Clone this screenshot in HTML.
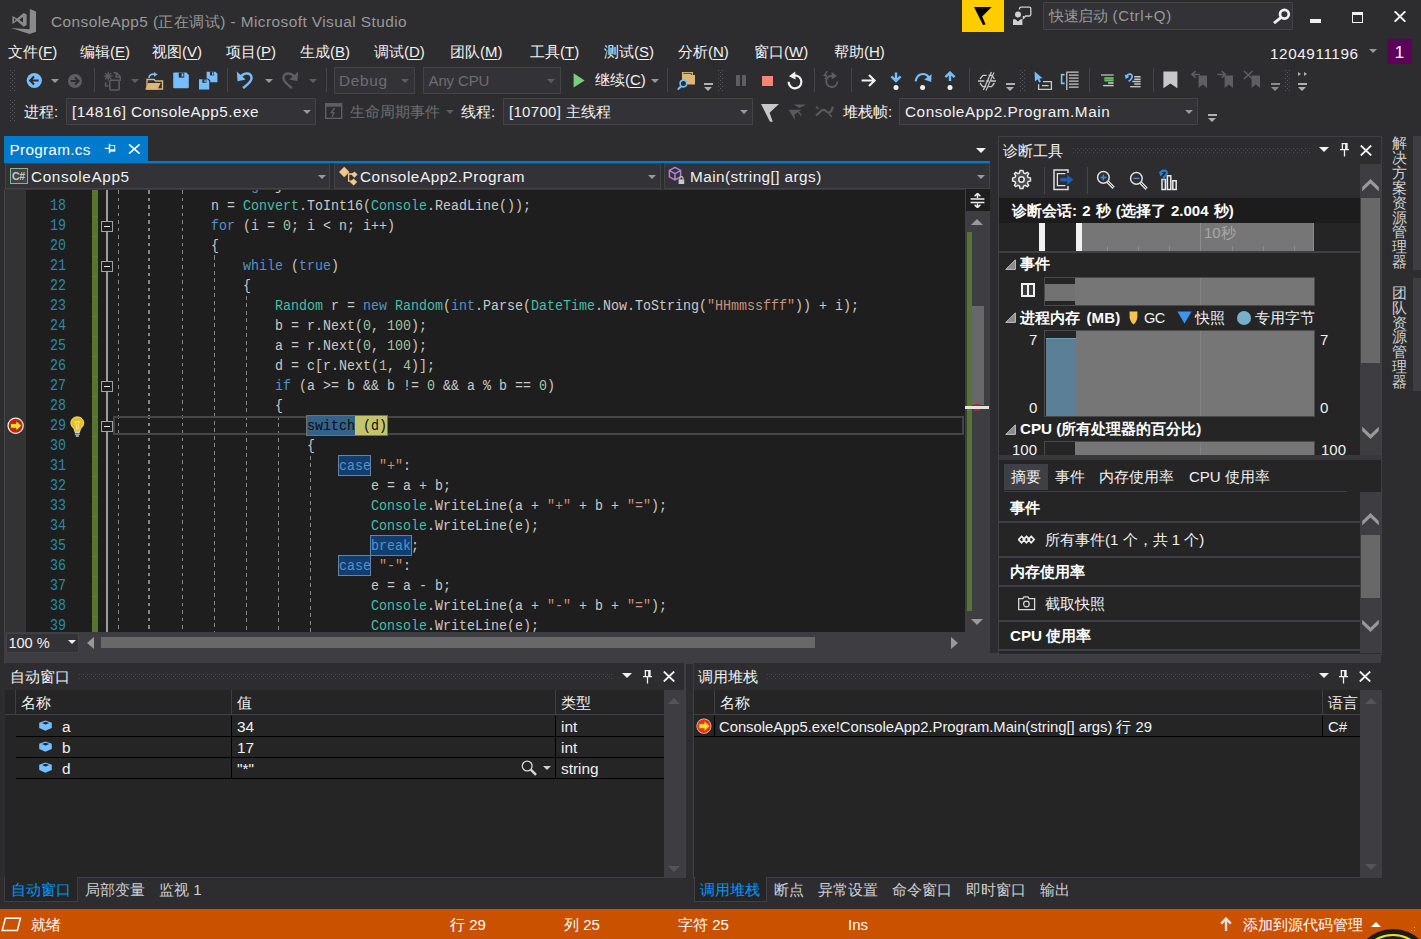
<!DOCTYPE html>
<html lang="zh">
<head>
<meta charset="utf-8">
<title>ConsoleApp5 - Microsoft Visual Studio</title>
<style>
*{box-sizing:border-box;margin:0;padding:0}
html,body{width:1421px;height:939px;overflow:hidden;background:#2d2d30}
body{position:relative;font-family:"Liberation Sans",sans-serif;font-size:15px;color:#f1f1f1}
.a{position:absolute}
.t{position:absolute;white-space:nowrap;line-height:20px}
u{text-decoration:underline;text-underline-offset:2px}
.grip{position:absolute;width:6px}
.sep{position:absolute;width:1px;background:#46464a}
.combo{position:absolute;background:#333337;border:1px solid #434346}
.dd{position:absolute;width:0;height:0;border-left:4px solid transparent;border-right:4px solid transparent;border-top:4px solid #999}
.code{position:absolute;left:115px;padding-top:2px;transform:scaleY(1.13);transform-origin:0 15.6px;font-family:"Liberation Mono",monospace;font-size:13.33px;line-height:20px;white-space:pre;color:#c9c9c9}
.ln{position:absolute;left:50px;padding-top:2px;transform:scaleY(1.22);transform-origin:0 16.2px;width:16px;font-family:"Liberation Mono",monospace;font-size:13.33px;line-height:20px;color:#2989a5;white-space:pre}
.k{color:#5193ca}.c{color:#49bda6}.s{color:#c9937d}.n{color:#aac29d}
.hl{}
.sw{color:#0c0c0c}.cur{color:#0c0c0c}
.panel{position:absolute;background:#252526}
.hdrdots{position:absolute;background-image:radial-gradient(#434348 0.75px,transparent 1px),radial-gradient(#434348 0.75px,transparent 1px);background-size:4px 4px;background-position:0 -1px,2px 1px}
</style>
</head>
<body>
<svg width="0" height="0" style="position:absolute"><defs><pattern id="gp" width="4" height="4" patternUnits="userSpaceOnUse"><rect x="0" y="0" width="1" height="1" fill="#58585e"/><rect x="2" y="2" width="1" height="1" fill="#58585e"/></pattern><pattern id="gp2" width="4" height="4" patternUnits="userSpaceOnUse"><rect x="0" y="0" width="1" height="1" fill="#4a4a50"/><rect x="2" y="2" width="1" height="1" fill="#4a4a50"/></pattern></defs></svg>

<!-- ================= TITLE BAR ================= -->
<div id="titlebar" class="a" style="left:0;top:0;width:1421px;height:35px">
  <svg class="a" style="left:11px;top:9px" width="25" height="25" viewBox="0 0 25 25"><path d="M18.9 0 L25 2.5 V22.8 L18.6 25 L0 18.9 L18.6 20.3 Z" fill="#8a8a8d"/><path d="M1.4 7 L6 9.6 L12.7 3.9 L15.6 5.4 V16 L12.7 17.7 L6 12 L1.4 14.9 Z M3.1 9.1 V12.7 L4.9 10.8 Z M8.1 10.8 L12 7.9 V13.6 Z" fill="#8a8a8d" fill-rule="evenodd"/></svg>
  <div class="t" style="left:51px;top:11.6px;font-size:15.4px;letter-spacing:0.435px;color:#999">ConsoleApp5 (正在调试) - Microsoft Visual Studio</div>
  <div class="a" style="left:962px;top:0;width:42px;height:32px;background:#ffcc00"></div>
  <svg class="a" style="left:974px;top:7px" width="18" height="18" viewBox="0 0 18 18"><path d="M0 0 H17.7 L8.2 9.6 L11.6 17.6 L9 18 Z" fill="#000"/></svg>
  <svg class="a" style="left:1012px;top:6px" width="20" height="20" viewBox="0 0 20 20"><circle cx="6" cy="8.6" r="3" fill="#d0d0d0"/><path d="M1 13.2 H3.4 L6 15.6 L8.6 13.2 H10.4 V19 H1 Z" fill="#d0d0d0"/><path d="M7.5 3.6 V2.6 Q7.5 1.2 9 1.2 H17.4 Q18.8 1.2 18.8 2.6 V8.6 Q18.8 10 17.4 10 H13.6 L11.4 12.4 V10" fill="none" stroke="#d0d0d0" stroke-width="1.3"/></svg>
  <div class="a" style="left:1043px;top:2px;width:250px;height:28px;background:#333337;border:1px solid #434346"></div>
  <div class="t" style="left:1049px;top:6px;font-size:15px;color:#999"><span style="letter-spacing:-0.35px">快速启动</span><span style="letter-spacing:0.7px"> (Ctrl+Q)</span></div>
  <svg class="a" style="left:1272px;top:7px" width="19" height="18" viewBox="0 0 19 18"><circle cx="12.4" cy="7.2" r="4.4" fill="none" stroke="#f1f1f1" stroke-width="2.7"/><path d="M9.2 10.4 L2 16.2" stroke="#f1f1f1" stroke-width="2.8"/></svg>
  <div class="a" style="left:1310px;top:19px;width:11px;height:4px;background:#f1f1f1"></div>
  <div class="a" style="left:1352px;top:12px;width:11px;height:11px;border:1px solid #f1f1f1;border-top-width:3px"></div>
  <svg class="a" style="left:1394px;top:11px" width="12" height="11" viewBox="0 0 12 11"><path d="M0.6 0.3 L11.4 10.7 M11.4 0.3 L0.6 10.7" stroke="#f1f1f1" stroke-width="2"/></svg>
</div>

<!-- ================= MENU BAR ================= -->
<div id="menubar" class="a" style="left:0;top:35px;width:1421px;height:32px;font-size:15px">
  <div class="t" style="left:8px;top:7px">文件(<u>F</u>)</div>
  <div class="t" style="left:80px;top:7px">编辑(<u>E</u>)</div>
  <div class="t" style="left:152px;top:7px">视图(<u>V</u>)</div>
  <div class="t" style="left:226px;top:7px">项目(<u>P</u>)</div>
  <div class="t" style="left:300px;top:7px">生成(<u>B</u>)</div>
  <div class="t" style="left:374px;top:7px">调试(<u>D</u>)</div>
  <div class="t" style="left:450px;top:7px">团队(<u>M</u>)</div>
  <div class="t" style="left:530px;top:7px">工具(<u>T</u>)</div>
  <div class="t" style="left:604px;top:7px">测试(<u>S</u>)</div>
  <div class="t" style="left:678px;top:7px">分析(<u>N</u>)</div>
  <div class="t" style="left:754px;top:7px">窗口(<u>W</u>)</div>
  <div class="t" style="left:834px;top:7px">帮助(<u>H</u>)</div>
  <div class="t" style="left:1270px;top:9px;font-size:15.3px;letter-spacing:0.579px">1204911196</div>
  <div class="dd" style="left:1369px;top:14px;border-top-color:#999"></div>
  <div class="a" style="left:1387px;top:4px;width:25px;height:25px;background:#5c005c"></div>
  <div class="t" style="left:1387px;top:8px;width:25px;text-align:center;font-size:17px;color:#fff">1</div>
</div>

<!-- ================= TOOLBARS ================= -->
<div id="toolbar1" class="a" style="left:0;top:67px;width:1421px;height:30px">
<svg class="a" style="left:10px;top:3px" width="6" height="22"><rect width="6" height="22" fill="url(#gp)"/></svg><svg class="a" style="left:26px;top:5px" width="17" height="17" viewBox="0 0 17 17"><circle cx="8.3" cy="8.5" r="7.6" fill="#75beff"/><path d="M12.6 8.5 H4.6 M8 4.6 L4.2 8.5 L8 12.4" stroke="#2d2d30" stroke-width="2.1" fill="none"/></svg><div class="dd" style="left:51px;top:12px;border-top-color:#999;border-left-width:4px;border-right-width:4px;border-top-width:4px"></div><svg class="a" style="left:67px;top:6px" width="16" height="16" viewBox="0 0 16 16"><circle cx="8" cy="8" r="7" fill="#5e5e62"/><path d="M3.6 8 H11.2 M8 4.4 L11.6 8 L8 11.6" stroke="#2d2d30" stroke-width="2" fill="none"/></svg><div class="sep" style="left:94px;top:1px;height:24px"></div><svg class="a" style="left:103px;top:4px" width="19" height="20" viewBox="0 0 19 20"><path d="M5.2 0.8 V9.6 M0.8 5.2 H9.6 M2.1 2.1 L8.3 8.3 M8.3 2.1 L2.1 8.3" stroke="#5e5e62" stroke-width="1.3"/><path d="M10.6 1.8 H13.4 L17.2 5.6 V10 M13.2 2 V6 H17" fill="none" stroke="#5e5e62" stroke-width="1.4"/><path d="M2.6 11.4 V15 H5.4" fill="none" stroke="#5e5e62" stroke-width="1.4"/><rect x="6.8" y="9.2" width="9.4" height="9.8" rx="1" fill="none" stroke="#5e5e62" stroke-width="1.5"/></svg><div class="dd" style="left:131px;top:12px;border-top-color:#5e5e62;border-left-width:4px;border-right-width:4px;border-top-width:4px"></div><svg class="a" style="left:144px;top:5px" width="21" height="19" viewBox="0 0 21 19"><path d="M3 7.5 H10 L11.5 9 H18.5 V17 H3 Z" fill="none" stroke="#dcb67a" stroke-width="1.4"/><path d="M1.2 17.4 L4.4 11 H16.6 L13.6 17.4 Z" fill="#dcb67a"/><path d="M5 6 Q5 2.2 9.6 2.2 H11" fill="none" stroke="#75beff" stroke-width="1.7"/><path d="M10 0 L13.6 2.4 L10 4.8 Z" fill="#75beff"/></svg><svg class="a" style="left:173px;top:5px" width="16" height="17" viewBox="0 0 16 17"><path d="M1.2 0.6 H13.4 L15.8 3 V15 Q15.8 16.2 14.6 16.2 H1.2 Q0.2 16.2 0.2 15 V1.6 Q0.2 0.6 1.2 0.6 Z" fill="#75beff"/><rect x="5.8" y="0.6" width="5.4" height="5" fill="#2d2d30"/><rect x="8.6" y="1.4" width="1.8" height="3.2" fill="#75beff"/></svg><svg class="a" style="left:198px;top:4px" width="20" height="19" viewBox="0 0 20 19"><path d="M8.6 0.8 H17.4 L19.4 2.8 V11.2 H8.6 Z" fill="#75beff"/><rect x="12" y="0.8" width="4" height="3.6" fill="#2d2d30"/><rect x="14" y="1.4" width="1.4" height="2.4" fill="#75beff"/><path d="M0.2 7.4 H10.2 L12.2 9.4 V18.6 H0.2 Z" fill="#2d2d30"/><path d="M1 8.2 H9.4 L11.2 10 V18.4 H1 Z" fill="#75beff"/><rect x="4.4" y="8.2" width="4" height="3.6" fill="#2d2d30"/><rect x="6.4" y="8.8" width="1.4" height="2.4" fill="#75beff"/></svg><div class="sep" style="left:227px;top:1px;height:24px"></div><svg class="a" style="left:236px;top:3px" width="18" height="19" viewBox="0 0 18 19"><path d="M4 8.4 C6.4 2.4 15.6 1.6 15.6 8 C15.6 12 11 15 7 18" fill="none" stroke="#75beff" stroke-width="2.4"/><path d="M0.8 1.6 L1.6 11.2 L9.6 9.6 Z" fill="#75beff"/></svg><div class="dd" style="left:265px;top:12px;border-top-color:#999;border-left-width:4px;border-right-width:4px;border-top-width:4px"></div><svg class="a" style="left:281px;top:3px" width="18" height="19" viewBox="0 0 18 19"><path d="M14 8.4 C11.6 2.4 2.4 1.6 2.4 8 C2.4 12 7 15 11 18" fill="none" stroke="#5e5e62" stroke-width="2.4"/><path d="M17.2 1.6 L16.4 11.2 L8.4 9.6 Z" fill="#5e5e62"/></svg><div class="dd" style="left:309px;top:12px;border-top-color:#5e5e62;border-left-width:4px;border-right-width:4px;border-top-width:4px"></div><div class="sep" style="left:326px;top:1px;height:24px"></div><div class="combo" style="left:334px;top:0px;width:81px;height:27px"></div><div class="t" style="left:339px;top:3.7px;font-size:15.3px;letter-spacing:0.744px;color:#6d6d70">Debug</div><div class="dd" style="left:401px;top:12px;border-top-color:#5e5e62;border-left-width:4px;border-right-width:4px;border-top-width:4px"></div><div class="combo" style="left:423px;top:0px;width:138px;height:27px"></div><div class="t" style="left:428.5px;top:3.7px;font-size:15.0px;letter-spacing:-0.127px;color:#6d6d70">Any CPU</div><div class="dd" style="left:547px;top:12px;border-top-color:#5e5e62;border-left-width:4px;border-right-width:4px;border-top-width:4px"></div><svg class="a" style="left:573px;top:6px" width="12" height="15" viewBox="0 0 12 15"><path d="M0.6 0.2 L11.6 7.4 L0.6 14.6 Z" fill="#7ad07a"/></svg><div class="t" style="left:595px;top:3px;font-size:15px">继续(<u>C</u>)</div><div class="dd" style="left:651px;top:12px;border-top-color:#999;border-left-width:4px;border-right-width:4px;border-top-width:4px"></div><div class="sep" style="left:667px;top:1px;height:24px"></div><svg class="a" style="left:677px;top:4px" width="19" height="20" viewBox="0 0 19 20"><path d="M5 1 H16 V4 H18 V13.5 H5 Z" fill="#dcb67a"/><path d="M6.4 2.4 H14.6 V4" stroke="#2d2d30" stroke-width="0.8" fill="none"/><circle cx="6.4" cy="12.6" r="3.3" fill="#2d2d30" stroke="#75beff" stroke-width="1.6"/><path d="M4 15.2 L0.8 18.6" stroke="#75beff" stroke-width="2"/></svg><div class="a" style="left:704px;top:16px;width:9px;height:1.5px;background:#b0b0b0"></div><div class="dd" style="left:704px;top:20px;border-top-color:#b0b0b0;border-left-width:4.5px;border-right-width:4.5px;border-top-width:4.5px"></div><svg class="a" style="left:718px;top:3px" width="6" height="22"><rect width="6" height="22" fill="url(#gp)"/></svg><div class="a" style="left:736px;top:8px;width:4px;height:11px;background:#5e5e62"></div><div class="a" style="left:742px;top:8px;width:4px;height:11px;background:#5e5e62"></div><div class="a" style="left:762px;top:9px;width:11px;height:10px;background:#f48771"></div><svg class="a" style="left:786px;top:4px" width="18" height="19" viewBox="0 0 18 19"><path d="M5.4 5.6 A6.4 6.4 0 1 1 2.6 10.8" fill="none" stroke="#f1f1f1" stroke-width="2.2"/><path d="M9.2 0.6 L3 5.2 L9.6 8.6 Z" fill="#f1f1f1"/></svg><div class="sep" style="left:814px;top:1px;height:24px"></div><svg class="a" style="left:822px;top:4px" width="19" height="19" viewBox="0 0 19 19"><path d="M12.6 5.6 A5.6 5.6 0 1 0 15.4 10.4" fill="none" stroke="#5e5e62" stroke-width="1.8"/><path d="M9.6 1 L15 5 L9.6 8.4 Z" fill="#5e5e62"/><path d="M5.4 0 L2.2 4.4 H4.8 L3 8.2" stroke="#5e5e62" stroke-width="1.3" fill="none"/></svg><div class="sep" style="left:851px;top:1px;height:24px"></div><svg class="a" style="left:861px;top:6px" width="16" height="15" viewBox="0 0 16 15"><path d="M0.6 7.5 H13 M8 2 L13.6 7.5 L8 13" stroke="#f1f1f1" stroke-width="2.1" fill="none"/></svg><svg class="a" style="left:890px;top:4px" width="12" height="20" viewBox="0 0 12 20"><path d="M6 1.6 V9.4 M1.4 5.4 L6 10 L10.6 5.4" stroke="#75beff" stroke-width="2.4" fill="none"/><circle cx="6" cy="16.4" r="2.5" fill="#f1f1f1"/></svg><svg class="a" style="left:914px;top:4px" width="19" height="20" viewBox="0 0 19 20"><path d="M1.6 10.4 Q3 3 9 3 Q13.4 3 15.2 7.4" stroke="#75beff" stroke-width="2.2" fill="none"/><path d="M17.6 3.2 L17.2 11 L10.2 8.6 Z" fill="#75beff"/><circle cx="8.6" cy="16.4" r="2.5" fill="#f1f1f1"/></svg><svg class="a" style="left:944px;top:4px" width="12" height="20" viewBox="0 0 12 20"><path d="M6 10 V2.2 M1.4 6.2 L6 1.6 L10.6 6.2" stroke="#75beff" stroke-width="2.4" fill="none"/><circle cx="6" cy="16.4" r="2.5" fill="#f1f1f1"/></svg><div class="sep" style="left:969px;top:1px;height:24px"></div><svg class="a" style="left:977px;top:4px" width="20" height="20" viewBox="0 0 20 20"><path d="M3 8 L6 4.4 H9.6 M11.6 4.4 H15 L17.4 8 M3 12 L5.6 15.6 H9.2 M11.2 15.6 H14.6 L17.4 12 M1 10 H7.4 M9.4 10 H12 M13.6 10 H19" stroke="#c8c8c8" stroke-width="1.3" fill="none"/><path d="M14.4 1 L6.4 19" stroke="#c8c8c8" stroke-width="1.3"/><path d="M17 1.6 L9 19.4" stroke="#c8c8c8" stroke-width="1.1"/></svg><div class="a" style="left:1006px;top:16px;width:9px;height:1.5px;background:#b0b0b0"></div><div class="dd" style="left:1006px;top:20px;border-top-color:#b0b0b0;border-left-width:4.5px;border-right-width:4.5px;border-top-width:4.5px"></div><svg class="a" style="left:1020px;top:3px" width="6" height="22"><rect width="6" height="22" fill="url(#gp)"/></svg><svg class="a" style="left:1033px;top:4px" width="20" height="20" viewBox="0 0 20 20"><path d="M1.6 0.6 L2 10.6 L4.6 8.2 L6.2 11.6 L8 10.8 L6.4 7.6 L9.6 7.2 Z" fill="#75beff"/><path d="M5.6 13.2 V18.4 H18.4 V10.6 H10" fill="none" stroke="#c8c8c8" stroke-width="1.3"/><path d="M9 14.6 H15.6" stroke="#c8c8c8" stroke-width="1.3"/></svg><svg class="a" style="left:1060px;top:4px" width="20" height="20" viewBox="0 0 20 20"><path d="M4.6 3.6 H1.6 V12.4 H4.6" fill="none" stroke="#75beff" stroke-width="1.6"/><path d="M6.4 1.2 H18.6 M9 4.2 H18.6 M9 7.2 H18.6 M9 10.2 H18.6 M9 13.2 H18.6 M9 16.2 H18.6 M6.8 1.2 V19" stroke="#c8c8c8" stroke-width="1.3" fill="none"/></svg><div class="sep" style="left:1089px;top:1px;height:24px"></div><svg class="a" style="left:1100px;top:7px" width="15" height="13" viewBox="0 0 15 13"><path d="M1 1 H13.6" stroke="#c8c8c8" stroke-width="1.2"/><rect x="4.4" y="3.2" width="9.2" height="4.2" fill="#67c267"/><path d="M4.4 5.3 H13.6" stroke="#3d7a3d" stroke-width="0.7"/><path d="M8.2 9 H13.6" stroke="#c8c8c8" stroke-width="1.6"/><path d="M3.2 11.6 H13.6" stroke="#c8c8c8" stroke-width="1.4"/></svg><svg class="a" style="left:1124px;top:6px" width="18" height="15" viewBox="0 0 18 15"><path d="M2.6 3.8 Q3.6 1 6 1.2 Q8.8 1.8 8 4.6 Q7.4 6.6 4.6 8.4" fill="none" stroke="#75beff" stroke-width="1.7"/><path d="M0.8 1.6 L1.6 6 L5.4 3.8 Z" fill="#75beff"/><path d="M10.2 3.8 H16.6 M10.2 6.2 H16.6 M8.4 8.6 H16.6 M10.2 11 H16.6" stroke="#c8c8c8" stroke-width="1.5"/><path d="M6.2 13.7 H16.6" stroke="#c8c8c8" stroke-width="1.3"/></svg><div class="sep" style="left:1153px;top:1px;height:24px"></div><svg class="a" style="left:1163px;top:4px" width="15" height="18" viewBox="0 0 15 18"><path d="M0.4 0.4 H14.4 V17.2 L7.4 12.4 L0.4 17.2 Z" fill="#c8c8c8"/></svg><svg class="a" style="left:1191px;top:3px" width="17" height="19" viewBox="0 0 17 19"><path d="M7.6 5.4 H16 V18 L11.8 14.6 L7.6 18 Z" fill="#5e5e62"/><path d="M1 4.4 H9 M4.6 1 L1 4.4 L4.6 7.8" stroke="#5e5e62" stroke-width="1.5" fill="none"/></svg><svg class="a" style="left:1217px;top:3px" width="17" height="19" viewBox="0 0 17 19"><path d="M7.6 5.4 H16 V18 L11.8 14.6 L7.6 18 Z" fill="#5e5e62"/><path d="M0.4 4.4 H8.4 M4.8 1 L8.4 4.4 L4.8 7.8" stroke="#5e5e62" stroke-width="1.5" fill="none"/></svg><svg class="a" style="left:1243px;top:3px" width="18" height="19" viewBox="0 0 18 19"><path d="M8.6 5.4 H17 V18 L12.8 14.6 L8.6 18 Z" fill="#5e5e62"/><path d="M1 1 L9.6 9 M9.6 1 L1 9" stroke="#5e5e62" stroke-width="1.5" fill="none"/></svg><div class="a" style="left:1271px;top:16px;width:9px;height:1.5px;background:#8a8a8a"></div><div class="dd" style="left:1271px;top:20px;border-top-color:#8a8a8a;border-left-width:4.5px;border-right-width:4.5px;border-top-width:4.5px"></div><svg class="a" style="left:1285px;top:3px" width="6" height="22"><rect width="6" height="22" fill="url(#gp)"/></svg><div class="a" style="left:1298px;top:5px;width:0;height:0;border-left:3px solid #b0b0b0;border-top:2.5px solid transparent;border-bottom:2.5px solid transparent"></div><div class="a" style="left:1304px;top:5px;width:0;height:0;border-left:3px solid #b0b0b0;border-top:2.5px solid transparent;border-bottom:2.5px solid transparent"></div><div class="a" style="left:1298px;top:16px;width:9px;height:1.5px;background:#b0b0b0"></div><div class="dd" style="left:1298px;top:20px;border-top-color:#b0b0b0;border-left-width:4.5px;border-right-width:4.5px;border-top-width:4.5px"></div>
</div>
<div id="toolbar2" class="a" style="left:0;top:97px;width:1421px;height:32px">
<svg class="a" style="left:10px;top:3px" width="6" height="22"><rect width="6" height="22" fill="url(#gp)"/></svg><div class="t" style="left:24px;top:5px;font-size:15px">进程:</div><div class="combo" style="left:66px;top:1px;width:250px;height:27px"></div><div class="t" style="left:72px;top:5px;font-size:15.3px;letter-spacing:0.476px">[14816] ConsoleApp5.exe</div><div class="dd" style="left:303px;top:13px;border-top-color:#999;border-left-width:4px;border-right-width:4px;border-top-width:4px"></div><svg class="a" style="left:325px;top:6px" width="18" height="17" viewBox="0 0 18 17"><rect x="0.7" y="0.7" width="16" height="14.6" fill="none" stroke="#5e5e62" stroke-width="1.4"/><rect x="0.7" y="0.7" width="16" height="3" fill="#5e5e62"/><path d="M9.6 5 L6.2 9.6 H9 L7.2 13.6" stroke="#5e5e62" stroke-width="1.4" fill="none"/></svg><div class="t" style="left:350px;top:5px;font-size:15px;color:#6d6d70">生命周期事件</div><div class="dd" style="left:446px;top:13px;border-top-color:#5e5e62;border-left-width:4px;border-right-width:4px;border-top-width:4px"></div><div class="t" style="left:461px;top:5px;font-size:15px">线程:</div><div class="combo" style="left:503px;top:1px;width:250px;height:27px"></div><div class="t" style="left:509px;top:5px;font-size:15.0px;letter-spacing:0.298px">[10700] 主线程</div><div class="dd" style="left:740px;top:13px;border-top-color:#999;border-left-width:4px;border-right-width:4px;border-top-width:4px"></div><svg class="a" style="left:761px;top:6px" width="19" height="19" viewBox="0 0 19 19"><path d="M0 0.9 H18 L8.6 9.8 L11.8 18.8 L9 18.8 Z" fill="#c8c8c8"/></svg><svg class="a" style="left:788px;top:6px" width="19" height="19" viewBox="0 0 19 19"><path d="M5.8 1.4 H18 L11.6 5 Z" fill="#5a5a5d"/><path d="M0.5 6.7 H13.7 L6.4 11.4 L7.2 17.2 Z" fill="#5a5a5d"/><path d="M10.4 8.6 L13.2 12.6" stroke="#5a5a5d" stroke-width="1.4"/></svg><svg class="a" style="left:814px;top:6px" width="20" height="18" viewBox="0 0 20 18"><path d="M2 12.6 L7 8 Q10 5.4 12.4 8.4 Q14.6 11 17.2 8.2 L19 3.6" stroke="#5a5a5d" stroke-width="2.2" fill="none"/><path d="M2 3.6 L4.4 6 M15 10.8 L17.8 14" stroke="#5a5a5d" stroke-width="1.6"/></svg><div class="t" style="left:843px;top:5px;font-size:15px">堆栈帧:</div><div class="combo" style="left:899px;top:1px;width:299px;height:27px"></div><div class="t" style="left:905px;top:5px;font-size:15.3px;letter-spacing:0.543px">ConsoleApp2.Program.Main</div><div class="dd" style="left:1185px;top:13px;border-top-color:#999;border-left-width:4px;border-right-width:4px;border-top-width:4px"></div><div class="a" style="left:1208px;top:17px;width:9px;height:1.5px;background:#b0b0b0"></div><div class="dd" style="left:1208px;top:21px;border-top-color:#b0b0b0;border-left-width:4.5px;border-right-width:4.5px;border-top-width:4.5px"></div>
</div>

<!-- ================= EDITOR ================= -->
<div id="editor" class="a" style="left:0;top:0;width:998px;height:664px">
<div class="a" style="left:4px;top:136px;width:144px;height:26px;background:#007acc"></div><div class="a" style="left:4px;top:161px;width:986px;height:2px;background:#007acc"></div><div class="t" style="left:9.5px;top:140px;font-size:15.3px;letter-spacing:0.290px;color:#fff">Program.cs</div><svg class="a" style="left:104px;top:143px" width="12" height="11" viewBox="0 0 12 11"><path d="M0.8 5.4 H5 M5.5 0.8 V10.2" stroke="#e6f1fa" stroke-width="1.4" fill="none"/><path d="M5.5 2.5 H10.7 V8" stroke="#d4e7f6" stroke-width="1.1" fill="none"/><rect x="5.5" y="6.3" width="5.8" height="2.4" fill="#e6f1fa"/></svg><svg class="a" style="left:128px;top:144px" width="13" height="10" viewBox="0 0 13 10"><path d="M1 0.4 L11.6 9.6 M11.6 0.4 L1 9.6" stroke="#fff" stroke-width="1.6"/></svg><div class="a" style="left:976px;top:148px;width:0;height:0;border-left:5px solid transparent;border-right:5px solid transparent;border-top:5px solid #f1f1f1"></div><div class="a" style="left:4px;top:163px;width:986px;height:26px;background:#2d2d30"></div><div class="a" style="left:5px;top:163px;width:325px;height:26px;background:#333337;border:1px solid #434346"></div><div class="a" style="left:334px;top:163px;width:327px;height:26px;background:#333337;border:1px solid #434346"></div><div class="a" style="left:664px;top:163px;width:326px;height:26px;background:#333337;border:1px solid #434346"></div><div class="a" style="left:10px;top:168px;width:18px;height:16px;border:1.5px solid #86b886;background:#424245"></div><div class="t" style="left:12px;top:168px;font-size:10.5px;line-height:16px;font-weight:bold;color:#c8c8c8;letter-spacing:-0.3px">C#</div><div class="t" style="left:31px;top:167px;font-size:15.3px;letter-spacing:0.622px">ConsoleApp5</div><div class="dd" style="left:318px;top:175px;border-top-color:#999;border-left-width:4px;border-right-width:4px;border-top-width:4px"></div><svg class="a" style="left:338px;top:166px" width="20" height="20" viewBox="0 0 20 20"><path d="M6.2 0.8 L11.4 6 L6.2 11.2 L1 6 Z" fill="#f0c88c"/><path d="M16.4 5.4 L19.6 8.6 L16.4 11.8 L13.2 8.6 Z" fill="#f0c88c"/><path d="M15.6 12.4 L19.2 16 L15.6 19.6 L12 16 Z" fill="#f0c88c"/><path d="M10 8 H15 M10.6 7.4 V15.2 H14" fill="none" stroke="#f0c88c" stroke-width="1.3"/></svg><div class="t" style="left:360px;top:167px;font-size:15.3px;letter-spacing:0.539px">ConsoleApp2.Program</div><div class="dd" style="left:648px;top:175px;border-top-color:#999;border-left-width:4px;border-right-width:4px;border-top-width:4px"></div><svg class="a" style="left:668px;top:166px" width="18" height="20" viewBox="0 0 18 20"><path d="M7 1.4 L12.6 4.4 V10.8 L7 13.8 L1.4 10.8 V4.4 Z M1.6 4.6 L7 7.6 L12.4 4.6 M7 7.6 V13.6" fill="none" stroke="#b180d7" stroke-width="1.5"/><rect x="10.6" y="13.4" width="5.6" height="4.6" fill="#c8c8c8"/><path d="M11.8 13.4 V12 Q11.8 10.6 13.4 10.6 Q15 10.6 15 12 V13.4" fill="none" stroke="#c8c8c8" stroke-width="1.1"/></svg><div class="t" style="left:690px;top:167px;font-size:15.3px;letter-spacing:0.444px">Main(string[] args)</div><div class="dd" style="left:977px;top:175px;border-top-color:#999;border-left-width:4px;border-right-width:4px;border-top-width:4px"></div><div id="ed" class="a" style="left:4px;top:189px;width:961px;height:443px;background:#1e1e1e;overflow:hidden">
<div class="a" style="left:0;top:0;width:22px;height:443px;background:#333333"></div><div class="a" style="left:0;top:0;width:1px;height:443px;background:#47474d"></div><div class="a" style="left:88px;top:0;width:6px;height:443px;background:repeating-linear-gradient(to bottom,#577430 0 19px,#5e7c36 19px 20px);background-position:0 8px"></div><div class="a" style="left:102px;top:0;width:2px;height:443px;background:#9c9c9c"></div><div class="a" style="left:114px;top:0px;width:1.4px;height:443px;background:repeating-linear-gradient(to bottom,#878787 0 3.75px,transparent 3.75px 7.5px);background-position:0 1px"></div><div class="a" style="left:144.4px;top:0px;width:1.4px;height:443px;background:repeating-linear-gradient(to bottom,#878787 0 3.75px,transparent 3.75px 7.5px);background-position:0 1px"></div><div class="a" style="left:178px;top:0px;width:1.4px;height:443px;background:repeating-linear-gradient(to bottom,#878787 0 3.75px,transparent 3.75px 7.5px);background-position:0 1px"></div><div class="a" style="left:210px;top:66px;width:1.4px;height:377px;background:repeating-linear-gradient(to bottom,#878787 0 3.75px,transparent 3.75px 7.5px);background-position:0 1px"></div><div class="a" style="left:242px;top:106px;width:1.4px;height:337px;background:repeating-linear-gradient(to bottom,#878787 0 3.75px,transparent 3.75px 7.5px);background-position:0 1px"></div><div class="a" style="left:274px;top:226px;width:1.4px;height:217px;background:repeating-linear-gradient(to bottom,#878787 0 3.75px,transparent 3.75px 7.5px);background-position:0 1px"></div><div class="a" style="left:306px;top:266px;width:1.4px;height:177px;background:repeating-linear-gradient(to bottom,#878787 0 3.75px,transparent 3.75px 7.5px);background-position:0 1px"></div><div class="a" style="left:109px;top:227px;width:851px;height:19px;border:2px solid #464646"></div><div class="a" style="left:302px;top:226px;width:82px;height:21px;background:#707070"></div><div class="a" style="left:303px;top:227px;width:48px;height:19px;background:#34638a"></div><div class="a" style="left:351px;top:227px;width:31.5px;height:19px;background:#c5c46e"></div><div class="a" style="left:334px;top:266px;width:33px;height:21px;background:#113d6f;border:1px solid #5f83ab"></div><div class="a" style="left:334px;top:366px;width:33px;height:21px;background:#113d6f;border:1px solid #5f83ab"></div><div class="a" style="left:366px;top:346px;width:42px;height:21px;background:#113d6f;border:1px solid #5f83ab"></div>
<div class="ln" style="left:46px;top:-14px">17</div><div class="code" style="left:111px;top:-14px">            <span class="k">string</span>  j</div>
<div class="ln" style="left:46px;top:6px">18</div><div class="code" style="left:111px;top:6px">            n = <span class="c">Convert</span>.ToInt16(<span class="c">Console</span>.ReadLine());</div>
<div class="ln" style="left:46px;top:26px">19</div><div class="code" style="left:111px;top:26px">            <span class="k">for</span> (i = <span class="n">0</span>; i &lt; n; i++)</div>
<div class="ln" style="left:46px;top:46px">20</div><div class="code" style="left:111px;top:46px">            {</div>
<div class="ln" style="left:46px;top:66px">21</div><div class="code" style="left:111px;top:66px">                <span class="k">while</span> (<span class="k">true</span>)</div>
<div class="ln" style="left:46px;top:86px">22</div><div class="code" style="left:111px;top:86px">                {</div>
<div class="ln" style="left:46px;top:106px">23</div><div class="code" style="left:111px;top:106px">                    <span class="c">Random</span> r = <span class="k">new</span> <span class="c">Random</span>(<span class="k">int</span>.Parse(<span class="c">DateTime</span>.Now.ToString(<span class="s">"HHmmssfff"</span>)) + i);</div>
<div class="ln" style="left:46px;top:126px">24</div><div class="code" style="left:111px;top:126px">                    b = r.Next(<span class="n">0</span>, <span class="n">100</span>);</div>
<div class="ln" style="left:46px;top:146px">25</div><div class="code" style="left:111px;top:146px">                    a = r.Next(<span class="n">0</span>, <span class="n">100</span>);</div>
<div class="ln" style="left:46px;top:166px">26</div><div class="code" style="left:111px;top:166px">                    d = c[r.Next(<span class="n">1</span>, <span class="n">4</span>)];</div>
<div class="ln" style="left:46px;top:186px">27</div><div class="code" style="left:111px;top:186px">                    <span class="k">if</span> (a &gt;= b &amp;&amp; b != <span class="n">0</span> &amp;&amp; a % b == <span class="n">0</span>)</div>
<div class="ln" style="left:46px;top:206px">28</div><div class="code" style="left:111px;top:206px">                    {</div>
<div class="ln" style="left:46px;top:226px">29</div><div class="code" style="left:111px;top:226px">                        <span class="sw">switch</span><span class="cur"> (d)</span></div>
<div class="ln" style="left:46px;top:246px">30</div><div class="code" style="left:111px;top:246px">                        {</div>
<div class="ln" style="left:46px;top:266px">31</div><div class="code" style="left:111px;top:266px">                            <span class="k hl">case</span> <span class="s">"+"</span>:</div>
<div class="ln" style="left:46px;top:286px">32</div><div class="code" style="left:111px;top:286px">                                e = a + b;</div>
<div class="ln" style="left:46px;top:306px">33</div><div class="code" style="left:111px;top:306px">                                <span class="c">Console</span>.WriteLine(a + <span class="s">"+"</span> + b + <span class="s">"="</span>);</div>
<div class="ln" style="left:46px;top:326px">34</div><div class="code" style="left:111px;top:326px">                                <span class="c">Console</span>.WriteLine(e);</div>
<div class="ln" style="left:46px;top:346px">35</div><div class="code" style="left:111px;top:346px">                                <span class="k hl">break</span>;</div>
<div class="ln" style="left:46px;top:366px">36</div><div class="code" style="left:111px;top:366px">                            <span class="k hl">case</span> <span class="s">"-"</span>:</div>
<div class="ln" style="left:46px;top:386px">37</div><div class="code" style="left:111px;top:386px">                                e = a - b;</div>
<div class="ln" style="left:46px;top:406px">38</div><div class="code" style="left:111px;top:406px">                                <span class="c">Console</span>.WriteLine(a + <span class="s">"-"</span> + b + <span class="s">"="</span>);</div>
<div class="ln" style="left:46px;top:426px">39</div><div class="code" style="left:111px;top:426px">                                <span class="c">Console</span>.WriteLine(e);</div>
<div class="a" style="left:97px;top:32px;width:12px;height:11px;border:1px solid #a2a2a2;background:#1e1e1e"></div><div class="a" style="left:100px;top:37px;width:6px;height:1px;background:#e8e8e8"></div><div class="a" style="left:97px;top:72px;width:12px;height:11px;border:1px solid #a2a2a2;background:#1e1e1e"></div><div class="a" style="left:100px;top:77px;width:6px;height:1px;background:#e8e8e8"></div><div class="a" style="left:97px;top:192px;width:12px;height:11px;border:1px solid #a2a2a2;background:#1e1e1e"></div><div class="a" style="left:100px;top:197px;width:6px;height:1px;background:#e8e8e8"></div><div class="a" style="left:97px;top:232px;width:12px;height:11px;border:1px solid #a2a2a2;background:#1e1e1e"></div><div class="a" style="left:100px;top:237px;width:6px;height:1px;background:#e8e8e8"></div><svg class="a" style="left:3px;top:228px" width="18" height="18" viewBox="0 0 18 18"><circle cx="8.6" cy="8.8" r="8.2" fill="#f1f1f1"/><circle cx="8.6" cy="8.8" r="7" fill="#e51400"/><path d="M3.6 6.4 H9 V3.6 L14.6 8.8 L9 14 V11.2 H3.6 Z" fill="#ffd83b" stroke="#5a4a00" stroke-width="0.8"/></svg><svg class="a" style="left:66px;top:227px" width="15" height="21" viewBox="0 0 15 21"><path d="M7.3 0.8 C3.4 0.8 0.8 3.6 0.8 7 C0.8 9.6 2.4 11 3.6 12.4 C4.4 13.4 4.6 14.2 4.6 15.4 H10 C10 14.2 10.2 13.4 11 12.4 C12.2 11 13.8 9.6 13.8 7 C13.8 3.6 11.2 0.8 7.3 0.8 Z" fill="#e8c020" stroke="#f5e9b0" stroke-width="0.8"/><path d="M5 5.6 H9.6 L8.2 8.4 V12.8 H6.4 V8.4 Z" fill="none" stroke="#f5e9b0" stroke-width="0.9"/><path d="M4.8 16.4 H9.8 M4.8 18.2 H9.8 M5.8 20 H8.8" stroke="#d0d0d0" stroke-width="1.3"/></svg><div class="a" style="left:0;top:0;width:961px;height:1px;background:#37373a"></div></div>
<div class="a" style="left:965px;top:189px;width:25px;height:443px;background:#3e3e42"></div><div class="a" style="left:966px;top:189px;width:24px;height:22px;background:#1e1e1e"></div><svg class="a" style="left:970px;top:193px" width="15" height="15" viewBox="0 0 15 15"><path d="M0.6 6 H14.4 M0.6 9.4 H14.4 M7.5 0.4 V5 M7.5 10.4 V14.6 M4.6 3.2 L7.5 0.4 L10.4 3.2 M4.6 11.8 L7.5 14.6 L10.4 11.8" stroke="#f1f1f1" stroke-width="1.5" fill="none"/></svg><div class="a" style="left:971px;top:219px;width:0;height:0;border-left:6px solid transparent;border-right:6px solid transparent;border-bottom:6px solid #999"></div><div class="a" style="left:967px;top:232px;width:5px;height:379px;background:#577430"></div><div class="a" style="left:972px;top:306px;width:12px;height:99px;background:#686868"></div><div class="a" style="left:974px;top:404px;width:6px;height:7px;background:#a02c36"></div><div class="a" style="left:965px;top:406px;width:24px;height:3px;background:#e2e2e2"></div><div class="a" style="left:971px;top:619px;width:0;height:0;border-left:6px solid transparent;border-right:6px solid transparent;border-top:6px solid #999"></div><div class="a" style="left:4px;top:632px;width:986px;height:32px;background:#3e3e42"></div><div class="a" style="left:6px;top:633px;width:73px;height:20px;background:#333337;border:1px solid #434346"></div><div class="t" style="left:8.4px;top:633px;font-size:14.6px">100 %</div><div class="dd" style="left:68px;top:640px;border-top-color:#f1f1f1;border-left-width:4px;border-right-width:4px;border-top-width:4px"></div><div class="a" style="left:87px;top:637px;width:0;height:0;border-top:6px solid transparent;border-bottom:6px solid transparent;border-right:7px solid #999"></div><div class="a" style="left:101px;top:637px;width:714px;height:11px;background:#686868"></div><div class="a" style="left:951px;top:637px;width:0;height:0;border-top:6px solid transparent;border-bottom:6px solid transparent;border-left:7px solid #999"></div>
</div>

<!-- ================= DIAGNOSTICS ================= -->
<div id="diag" class="a" style="left:0;top:0;width:0;height:0">
<div class="a" style="left:4px;top:653px;width:1377px;height:10px;background:#3e3e42"></div><div class="a" style="left:998px;top:136px;width:384px;height:519px;background:#2d2d30;border:1px solid #3f3f46"></div><div class="t" style="left:1003px;top:141px;font-size:15px">诊断工具</div><svg class="a" style="left:1073px;top:148px" width="237" height="5"><rect width="237" height="5" fill="url(#gp2)"/></svg><div class="dd" style="left:1319px;top:147px;border-top-color:#f1f1f1;border-left-width:5px;border-right-width:5px;border-top-width:5px"></div><svg class="a" style="left:1340px;top:143px" width="9" height="14" viewBox="0 0 9 14"><path d="M1.6 0.7 H7 V6.4 M2.4 0.7 V6.4 M0 6.7 H9 M4.5 6.7 V13.6 M5.8 1 V6.4" stroke="#f1f1f1" stroke-width="1.3" fill="none"/></svg><svg class="a" style="left:1360px;top:145px" width="12" height="11" viewBox="0 0 12 11"><path d="M0.8 0.5 L11.2 10.5 M11.2 0.5 L0.8 10.5" stroke="#f1f1f1" stroke-width="1.8"/></svg><svg class="a" style="left:1011px;top:169px" width="21" height="21" viewBox="0 0 21 21"><path d="M10.5 1.4 L12 1.6 L12.6 4 L14.2 4.7 L16.4 3.4 L17.7 4.7 L16.4 6.9 L17 8.5 L19.5 9.1 V11.9 L17 12.5 L16.4 14.1 L17.7 16.3 L16.4 17.6 L14.2 16.3 L12.6 17 L12 19.5 H9.1 L8.5 17 L6.9 16.3 L4.7 17.6 L3.4 16.3 L4.7 14.1 L4 12.5 L1.6 11.9 V9.1 L4 8.5 L4.7 6.9 L3.4 4.7 L4.7 3.4 L6.9 4.7 L8.5 4 L9.1 1.5 Z" fill="#4a4a4d" stroke="#e8e8e8" stroke-width="1.4"/><circle cx="10.5" cy="10.5" r="2.7" fill="#2d2d30" stroke="#e8e8e8" stroke-width="1.6"/></svg><div class="sep" style="left:1044px;top:167px;height:27px"></div><svg class="a" style="left:1053px;top:169px" width="22" height="22" viewBox="0 0 22 22"><path d="M15 4 V1 H1 V20.4 H15 V17" fill="none" stroke="#e0e0e0" stroke-width="1.5"/><path d="M12.4 4.6 H4.4 V16.6 H12.4" fill="none" stroke="#e0e0e0" stroke-width="1.3"/><path d="M7 8.6 H14 V5 L20.6 10.7 L14 16.4 V12.8 H7 Z" fill="#1d5fb4" stroke="#2d2d30" stroke-width="0.6"/></svg><div class="sep" style="left:1087px;top:167px;height:27px"></div><svg class="a" style="left:1096px;top:170px" width="20" height="20" viewBox="0 0 20 20"><circle cx="7.4" cy="7.4" r="5.8" fill="none" stroke="#e0e0e0" stroke-width="1.5"/><path d="M11.6 11.6 L17.6 17.8" stroke="#e0e0e0" stroke-width="3.2"/><path d="M11.9 11.9 L17.3 17.5" stroke="#2d2d30" stroke-width="0.9"/><path d="M4.4 7.4 H10.4 M7.4 4.4 V10.4" stroke="#3a8ee6" stroke-width="1.5"/></svg><svg class="a" style="left:1129px;top:171px" width="20" height="20" viewBox="0 0 20 20"><circle cx="7.4" cy="7.4" r="5.8" fill="none" stroke="#e0e0e0" stroke-width="1.5"/><path d="M11.6 11.6 L17.6 17.8" stroke="#e0e0e0" stroke-width="3.2"/><path d="M11.9 11.9 L17.3 17.5" stroke="#2d2d30" stroke-width="0.9"/><path d="M4.4 7.4 H10.4" stroke="#3a8ee6" stroke-width="1.5"/></svg><svg class="a" style="left:1158px;top:169px" width="21" height="22" viewBox="0 0 21 22"><path d="M4 10.6 H7.4 V20.4 H4 Z M9.4 6.8 H12.8 V20.4 H9.4 Z M14.8 11.8 H18.2 V20.4 H14.8 Z" fill="#2d2d30" stroke="#e8e8e8" stroke-width="1.5"/><path d="M2.6 4.4 Q3 1.4 6 1.4 Q9.4 1.6 8.8 4.6 Q8.2 6.4 5.8 8.2 V9.6" fill="none" stroke="#2f7fd8" stroke-width="2"/><path d="M1 2.4 L5.4 4.2 L2.4 7.6 Z" fill="#2f7fd8"/><rect x="4.8" y="10.6" width="2" height="2" fill="#2f7fd8"/></svg><div class="a" style="left:1360px;top:164px;width:21px;height:291px;background:#3e3e42"></div><svg class="a" style="left:1362px;top:179px" width="17" height="12" viewBox="0 0 17 12"><path d="M0.2 8 L8.5 0 L16.8 8 V12.4 L8.5 4.6 L0.2 12.4 Z" fill="#999"/></svg><div class="a" style="left:1361px;top:198px;width:19px;height:165px;background:#686868"></div><svg class="a" style="left:1362px;top:427px" width="17" height="12" viewBox="0 0 17 12"><path d="M0.2 4 L8.5 12 L16.8 4 V-0.4 L8.5 7.4 L0.2 -0.4 Z" fill="#999"/></svg><div class="a" style="left:999px;top:198px;width:361px;height:257px;background:#252526"></div><div class="a" style="left:999px;top:198px;width:361px;height:25px;background:#1c1c1d"></div><div class="t" style="left:1012px;top:201px;font-size:15px;font-weight:bold;word-spacing:1px;color:#fff">诊断会话: 2 秒 (选择了 2.004 秒)</div><div class="a" style="left:1082px;top:223px;width:232px;height:28px;background:#767676"></div><div class="a" style="left:1039px;top:223px;width:6px;height:28px;background:#f1f1f1"></div><div class="a" style="left:1076px;top:223px;width:6px;height:28px;background:#f1f1f1"></div><div class="a" style="left:1107px;top:246px;width:1px;height:5px;background:#8c8c8c"></div><div class="a" style="left:1138px;top:246px;width:1px;height:5px;background:#8c8c8c"></div><div class="a" style="left:1169px;top:246px;width:1px;height:5px;background:#8c8c8c"></div><div class="a" style="left:1232px;top:246px;width:1px;height:5px;background:#8c8c8c"></div><div class="a" style="left:1263px;top:246px;width:1px;height:5px;background:#8c8c8c"></div><div class="a" style="left:1294px;top:246px;width:1px;height:5px;background:#8c8c8c"></div><div class="a" style="left:1200px;top:223px;width:1px;height:28px;background:#8c8c8c"></div><div class="a" style="left:1313px;top:223px;width:1px;height:28px;background:#8c8c8c"></div><div class="t" style="left:1204px;top:223px;font-size:15px;color:#a8a8a8">10秒</div><div class="a" style="left:999px;top:251px;width:361px;height:2px;background:#3f3f46"></div><svg class="a" style="left:1005px;top:259px" width="11" height="11" viewBox="0 0 11 11"><path d="M10.4 0.8 V10.4 H0.8 Z" fill="#8a8a8a" stroke="#c0c0c0" stroke-width="1"/></svg><div class="t" style="left:1020px;top:254px;font-size:15.2px;font-weight:bold;color:#fff">事件</div><div class="a" style="left:1044px;top:277px;width:271px;height:29px;background:#767676;border:1px solid #4a4a4c"></div><div class="a" style="left:1045px;top:278px;width:30px;height:27px;background:#252526"></div><div class="a" style="left:1045px;top:284px;width:30px;height:17px;background:#727272"></div><div class="a" style="left:1200px;top:278px;width:1px;height:27px;background:#838383"></div><div class="a" style="left:1021px;top:283px;width:14px;height:14px;border:2px solid #f1f1f1;background:#3a3a3c"></div><div class="a" style="left:1027px;top:283px;width:2px;height:14px;background:#f1f1f1"></div><svg class="a" style="left:1005px;top:312px" width="11" height="11" viewBox="0 0 11 11"><path d="M10.4 0.8 V10.4 H0.8 Z" fill="#8a8a8a" stroke="#c0c0c0" stroke-width="1"/></svg><div class="t" style="left:1020px;top:308px;font-size:15px;font-weight:bold;word-spacing:1.5px;letter-spacing:0.15px;color:#fff">进程内存 (MB)</div><svg class="a" style="left:1129px;top:311px" width="9" height="14" viewBox="0 0 9 14"><path d="M0.6 0.6 H8.4 V6 Q8 10.6 4.5 13.6 Q1 10.6 0.6 6 Z" fill="#f5c24a"/></svg><div class="t" style="left:1144px;top:308px;font-size:14.6px;letter-spacing:-0.5px">GC</div><svg class="a" style="left:1177px;top:311px" width="15" height="13" viewBox="0 0 15 13"><path d="M0.4 0.4 H14.6 L7.5 12.6 Z" fill="#3a96f0"/></svg><div class="t" style="left:1195px;top:308px;font-size:15px">快照</div><div class="a" style="left:1237px;top:311px;width:14px;height:14px;border-radius:7px;background:#78b0cc"></div><div class="t" style="left:1255px;top:308px;font-size:15px">专用字节</div><div class="a" style="left:1044px;top:330px;width:271px;height:87px;background:#767676;border:1px solid #4a4a4c"></div><div class="a" style="left:1045px;top:331px;width:31px;height:85px;background:#252526"></div><div class="a" style="left:1046px;top:338px;width:29.5px;height:78px;background:#5a7f96;border-top:1.5px solid #6e9db8"></div><div class="a" style="left:1200px;top:331px;width:1px;height:85px;background:#838383"></div><div class="t" style="left:1029px;top:330px;font-size:15px">7</div><div class="t" style="left:1320px;top:330px;font-size:15px">7</div><div class="t" style="left:1029px;top:398px;font-size:15px">0</div><div class="t" style="left:1320px;top:398px;font-size:15px">0</div><svg class="a" style="left:1005px;top:424px" width="11" height="11" viewBox="0 0 11 11"><path d="M10.4 0.8 V10.4 H0.8 Z" fill="#8a8a8a" stroke="#c0c0c0" stroke-width="1"/></svg><div class="t" style="left:1020px;top:419px;font-size:15.2px;font-weight:bold;color:#fff">CPU (所有处理器的百分比)</div><div class="a" style="left:1044px;top:441px;width:271px;height:14px;background:#767676;border:1px solid #4a4a4c;border-bottom:none"></div><div class="a" style="left:1045px;top:442px;width:30px;height:13px;background:#252526"></div><div class="a" style="left:1200px;top:442px;width:1px;height:13px;background:#838383"></div><div class="a" style="left:999px;top:440px;width:361px;height:15px;overflow:hidden"><div class="t" style="left:13px;top:0;font-size:15px">100</div><div class="t" style="left:322px;top:0;font-size:15px">100</div></div><div class="a" style="left:999px;top:455px;width:382px;height:5px;background:#39393d"></div><div class="a" style="left:999px;top:460px;width:382px;height:32px;background:#252526"></div><div class="a" style="left:1004px;top:464px;width:44px;height:26px;background:#3f3f46"></div><div class="a" style="left:1004px;top:491px;width:343px;height:2px;background:#3f3f46"></div><div class="t" style="left:1011px;top:467px;font-size:15px">摘要</div><div class="t" style="left:1055px;top:467px;font-size:15px">事件</div><div class="t" style="left:1099px;top:467px;font-size:15px">内存使用率</div><div class="t" style="left:1189px;top:467px;font-size:15px">CPU 使用率</div><div class="a" style="left:999px;top:492px;width:361px;height:161px;background:#252526;overflow:hidden"><div class="a" style="left:0;top:29px;width:361px;height:2px;background:#3f3f46"></div><div class="a" style="left:0;top:64px;width:361px;height:2px;background:#3f3f46"></div><div class="a" style="left:0;top:93px;width:361px;height:2px;background:#3f3f46"></div><div class="a" style="left:0;top:128px;width:361px;height:2px;background:#3f3f46"></div><div class="a" style="left:0;top:157px;width:361px;height:2px;background:#3f3f46"></div><div class="t" style="left:11px;top:6px;font-size:15.2px;font-weight:bold;color:#fff">事件</div><div class="t" style="left:46px;top:38px;font-size:15px">所有事件(1 个，共 1 个)</div><div class="t" style="left:11px;top:70px;font-size:15.2px;font-weight:bold;color:#fff">内存使用率</div><div class="t" style="left:46px;top:102px;font-size:15px">截取快照</div><div class="t" style="left:11px;top:134px;font-size:15.2px;font-weight:bold;color:#fff">CPU 使用率</div></div><svg class="a" style="left:1018px;top:535px" width="18" height="10" viewBox="0 0 18 10"><path d="M3.6 1.4 L6.6 4.6 L3.6 7.8 L0.6 4.6 Z M8.4 1.4 L11.4 4.6 L8.4 7.8 L5.4 4.6 Z M13.2 1.4 L16.2 4.6 L13.2 7.8 L10.2 4.6 Z" fill="none" stroke="#ececec" stroke-width="1.7"/></svg><svg class="a" style="left:1018px;top:596px" width="18" height="15" viewBox="0 0 18 15"><path d="M0.7 2.6 H5 L6 0.8 H10 L11 2.6 H16.6 V13.6 H0.7 Z" fill="none" stroke="#d8d8d8" stroke-width="1.3"/><circle cx="8.4" cy="8" r="2.8" fill="none" stroke="#d8d8d8" stroke-width="1.2"/></svg><div class="a" style="left:1360px;top:492px;width:21px;height:161px;background:#3e3e42"></div><svg class="a" style="left:1362px;top:513px" width="17" height="12" viewBox="0 0 17 12"><path d="M0.2 8 L8.5 0 L16.8 8 V12.4 L8.5 4.6 L0.2 12.4 Z" fill="#999"/></svg><div class="a" style="left:1361px;top:535px;width:19px;height:63px;background:#686868"></div><svg class="a" style="left:1362px;top:620px" width="17" height="12" viewBox="0 0 17 12"><path d="M0.2 4 L8.5 12 L16.8 4 V-0.4 L8.5 7.4 L0.2 -0.4 Z" fill="#999"/></svg>
</div>

<!-- ================= RIGHT TABS ================= -->
<div id="righttabs" class="a" style="left:0;top:0;width:0;height:0">
<div class="a" style="left:1413px;top:136px;width:8px;height:134px;background:#3e3e42"></div><div class="a" style="left:1413px;top:278px;width:8px;height:113px;background:#3e3e42"></div><div class="t" style="left:1391px;top:136px;width:16px;text-align:center;font-size:15px;line-height:14.9px;color:#d0d0d0">解<br>决<br>方<br>案<br>资<br>源<br>管<br>理<br>器</div><div class="t" style="left:1391px;top:286px;width:16px;text-align:center;font-size:15px;line-height:14.8px;color:#d0d0d0">团<br>队<br>资<br>源<br>管<br>理<br>器</div>
</div>

<!-- ================= BOTTOM PANELS ================= -->
<div id="autos" class="a" style="left:0;top:0;width:0;height:0">
<div class="a" style="left:684px;top:663px;width:1.5px;height:215px;background:#3f3f46"></div><div class="a" style="left:693px;top:663px;width:1px;height:215px;background:#3f3f46"></div><div class="a" style="left:5px;top:663px;width:679px;height:27px;background:#2d2d30"></div><div class="t" style="left:9.5px;top:667px;font-size:14.6px">自动窗口</div><svg class="a" style="left:79px;top:674px" width="533" height="5"><rect width="533" height="5" fill="url(#gp2)"/></svg><div class="dd" style="left:622px;top:673px;border-top-color:#f1f1f1;border-left-width:5px;border-right-width:5px;border-top-width:5px"></div><svg class="a" style="left:643px;top:670px" width="9" height="14" viewBox="0 0 9 14"><path d="M1.6 0.7 H7 V6.4 M2.4 0.7 V6.4 M0 6.7 H9 M4.5 6.7 V13.6 M5.8 1 V6.4" stroke="#f1f1f1" stroke-width="1.3" fill="none"/></svg><svg class="a" style="left:663px;top:671px" width="12" height="11" viewBox="0 0 12 11"><path d="M0.8 0.5 L11.2 10.5 M11.2 0.5 L0.8 10.5" stroke="#f1f1f1" stroke-width="1.8"/></svg><div class="a" style="left:5px;top:690px;width:659px;height:188px;background:#252526;border-bottom:1px solid #3f3f46"></div><div class="a" style="left:5px;top:714px;width:659px;height:1px;background:#3f3f46"></div><div class="a" style="left:15px;top:690px;width:1px;height:24px;background:#3f3f46"></div><div class="a" style="left:231px;top:690px;width:1px;height:24px;background:#3f3f46"></div><div class="a" style="left:555px;top:690px;width:1px;height:24px;background:#3f3f46"></div><div class="t" style="left:21px;top:693px;font-size:15px">名称</div><div class="t" style="left:237px;top:693px;font-size:15px">值</div><div class="t" style="left:561px;top:693px;font-size:15px">类型</div><div class="a" style="left:16px;top:736px;width:648px;height:1px;background:#000"></div><svg class="a" style="left:39px;top:720px" width="13" height="11" viewBox="0 0 13 11"><path d="M6.4 0.4 L12.8 2.8 V8 L6.4 10.8 L0.2 8 V2.8 Z" fill="#75beff"/><path d="M3 3 L6.6 4.4 L10.2 3 L6.6 1.8 Z" fill="#252526"/></svg><div class="t" style="left:62px;top:717px;font-size:15.4px">a</div><div class="t" style="left:237px;top:717px;font-size:15.4px">34</div><div class="t" style="left:561px;top:717px;font-size:15.4px">int</div><div class="a" style="left:16px;top:757px;width:648px;height:1px;background:#000"></div><svg class="a" style="left:39px;top:741px" width="13" height="11" viewBox="0 0 13 11"><path d="M6.4 0.4 L12.8 2.8 V8 L6.4 10.8 L0.2 8 V2.8 Z" fill="#75beff"/><path d="M3 3 L6.6 4.4 L10.2 3 L6.6 1.8 Z" fill="#252526"/></svg><div class="t" style="left:62px;top:738px;font-size:15.4px">b</div><div class="t" style="left:237px;top:738px;font-size:15.4px">17</div><div class="t" style="left:561px;top:738px;font-size:15.4px">int</div><div class="a" style="left:16px;top:778px;width:648px;height:1px;background:#000"></div><svg class="a" style="left:39px;top:762px" width="13" height="11" viewBox="0 0 13 11"><path d="M6.4 0.4 L12.8 2.8 V8 L6.4 10.8 L0.2 8 V2.8 Z" fill="#75beff"/><path d="M3 3 L6.6 4.4 L10.2 3 L6.6 1.8 Z" fill="#252526"/></svg><div class="t" style="left:62px;top:759px;font-size:15.4px">d</div><div class="t" style="left:237px;top:759px;font-size:15.4px">"*"</div><div class="t" style="left:561px;top:759px;font-size:15.4px">string</div><div class="a" style="left:231px;top:716px;width:1px;height:62px;background:#000"></div><div class="a" style="left:555px;top:716px;width:1px;height:62px;background:#000"></div><svg class="a" style="left:521px;top:760px" width="17" height="16" viewBox="0 0 17 16"><circle cx="6.2" cy="6" r="4.9" fill="none" stroke="#d8d8d8" stroke-width="1.3"/><path d="M9.8 9.6 L15 14.8" stroke="#d8d8d8" stroke-width="2.4"/></svg><div class="dd" style="left:543px;top:766px;border-top-color:#d0d0d0;border-left-width:4px;border-right-width:4px;border-top-width:4px"></div><div class="a" style="left:664px;top:690px;width:20px;height:188px;background:#3e3e42"></div><div class="a" style="left:668px;top:698px;width:0;height:0;border-left:6px solid transparent;border-right:6px solid transparent;border-bottom:6px solid #555"></div><div class="a" style="left:668px;top:866px;width:0;height:0;border-left:6px solid transparent;border-right:6px solid transparent;border-top:6px solid #555"></div><div class="a" style="left:4px;top:877px;width:74px;height:25px;background:#252526;border:1px solid #3f3f46;border-top:none"></div><div class="t" style="left:11px;top:880px;font-size:14.6px;color:#0097fb">自动窗口</div><div class="t" style="left:85px;top:880px;font-size:14.9px;color:#d0d0d0">局部变量</div><div class="t" style="left:159px;top:880px;font-size:14.9px;color:#d0d0d0">监视 1</div>
</div>
<div id="callstack" class="a" style="left:0;top:0;width:0;height:0">
<div class="a" style="left:694px;top:663px;width:688px;height:27px;background:#2d2d30"></div><div class="t" style="left:698px;top:667px;font-size:14.9px">调用堆栈</div><svg class="a" style="left:767px;top:674px" width="543" height="5"><rect width="543" height="5" fill="url(#gp2)"/></svg><div class="dd" style="left:1319px;top:673px;border-top-color:#f1f1f1;border-left-width:5px;border-right-width:5px;border-top-width:5px"></div><svg class="a" style="left:1339px;top:670px" width="9" height="14" viewBox="0 0 9 14"><path d="M1.6 0.7 H7 V6.4 M2.4 0.7 V6.4 M0 6.7 H9 M4.5 6.7 V13.6 M5.8 1 V6.4" stroke="#f1f1f1" stroke-width="1.3" fill="none"/></svg><svg class="a" style="left:1359px;top:671px" width="12" height="11" viewBox="0 0 12 11"><path d="M0.8 0.5 L11.2 10.5 M11.2 0.5 L0.8 10.5" stroke="#f1f1f1" stroke-width="1.8"/></svg><div class="a" style="left:694px;top:690px;width:688px;height:188px;background:#252526;border-bottom:1px solid #3f3f46"></div><div class="a" style="left:694px;top:714px;width:666px;height:1px;background:#3f3f46"></div><div class="a" style="left:714px;top:690px;width:1px;height:24px;background:#3f3f46"></div><div class="a" style="left:714px;top:716px;width:1px;height:20px;background:#000"></div><div class="a" style="left:1322px;top:690px;width:1px;height:24px;background:#3f3f46"></div><div class="a" style="left:1322px;top:716px;width:1px;height:20px;background:#000"></div><div class="t" style="left:720px;top:693px;font-size:15px">名称</div><div class="t" style="left:1328px;top:693px;font-size:15px">语言</div><svg class="a" style="left:696px;top:718px" width="16.6" height="16.6" viewBox="0 0 18 18"><circle cx="8.6" cy="8.8" r="8.2" fill="#f1c8c0"/><circle cx="8.6" cy="8.8" r="7.4" fill="#e8311a"/><path d="M3.4 6.4 H9 V3.4 L14.8 8.8 L9 14.2 V11.2 H3.4 Z" fill="#ffd83b" stroke="#c07a00" stroke-width="0.7"/></svg><div class="t" style="left:719px;top:717px;font-size:14.8px;letter-spacing:-0.011px">ConsoleApp5.exe!ConsoleApp2.Program.Main(string[] args) 行 29</div><div class="t" style="left:1328px;top:717px;font-size:15px">C#</div><div class="a" style="left:694px;top:736px;width:666px;height:1px;background:#000"></div><div class="a" style="left:1360px;top:690px;width:22px;height:188px;background:#3e3e42"></div><div class="a" style="left:1365px;top:698px;width:0;height:0;border-left:6px solid transparent;border-right:6px solid transparent;border-bottom:6px solid #555"></div><div class="a" style="left:1365px;top:864px;width:0;height:0;border-left:6px solid transparent;border-right:6px solid transparent;border-top:6px solid #555"></div><div class="a" style="left:694px;top:877px;width:73px;height:25px;background:#252526;border:1px solid #3f3f46;border-top:none"></div><div class="t" style="left:700px;top:880px;font-size:14.8px;color:#0097fb">调用堆栈</div><div class="t" style="left:774px;top:880px;font-size:14.9px;color:#d0d0d0">断点</div><div class="t" style="left:818px;top:880px;font-size:14.9px;color:#d0d0d0">异常设置</div><div class="t" style="left:892px;top:880px;font-size:14.9px;color:#d0d0d0">命令窗口</div><div class="t" style="left:966px;top:880px;font-size:14.9px;color:#d0d0d0">即时窗口</div><div class="t" style="left:1040px;top:880px;font-size:14.9px;color:#d0d0d0">输出</div>
</div>

<!-- ================= STATUS BAR ================= -->
<div id="status" class="a" style="left:0;top:909px;width:1421px;height:30px;background:#ca5100;overflow:hidden;color:#fff">
<svg class="a" style="left:1px;top:8px" width="21" height="15" viewBox="0 0 21 15"><path d="M4.4 1.2 H19.4 L16.4 13.4 H1.2 Z" fill="none" stroke="#fff" stroke-width="1.5"/></svg><div class="t" style="left:31px;top:6px;font-size:14.8px">就绪</div><div class="t" style="left:450px;top:6px;font-size:15px">行 29</div><div class="t" style="left:564px;top:6px;font-size:15px">列 25</div><div class="t" style="left:678px;top:6px;font-size:15px">字符 25</div><div class="t" style="left:848px;top:6px;font-size:15px">Ins</div><svg class="a" style="left:1220px;top:8px" width="12" height="15" viewBox="0 0 12 15"><path d="M6 14 V2 M1.2 6.6 L6 1.6 L10.8 6.6" fill="none" stroke="#e0e0e0" stroke-width="2.4"/></svg><div class="t" style="left:1243px;top:6px;font-size:15px">添加到源代码管理</div><div class="a" style="left:1371px;top:13px;width:0;height:0;border-left:5px solid transparent;border-right:5px solid transparent;border-bottom:5px solid #fff"></div><div class="a" style="left:1407px;top:14px;width:10px;height:10px;background-image:radial-gradient(#e8a070 0.8px,transparent 1px);background-size:3px 3px;clip-path:polygon(100% 0,100% 100%,0 100%)"></div><svg class="a" style="left:1353px;top:20px" width="80" height="10" viewBox="0 0 80 10"><circle cx="40" cy="39.6" r="39.5" fill="#1c1c1c"/><circle cx="40" cy="39.6" r="33.6" fill="none" stroke="#e8e020" stroke-width="2.2"/></svg>
</div>

</body>
</html>
